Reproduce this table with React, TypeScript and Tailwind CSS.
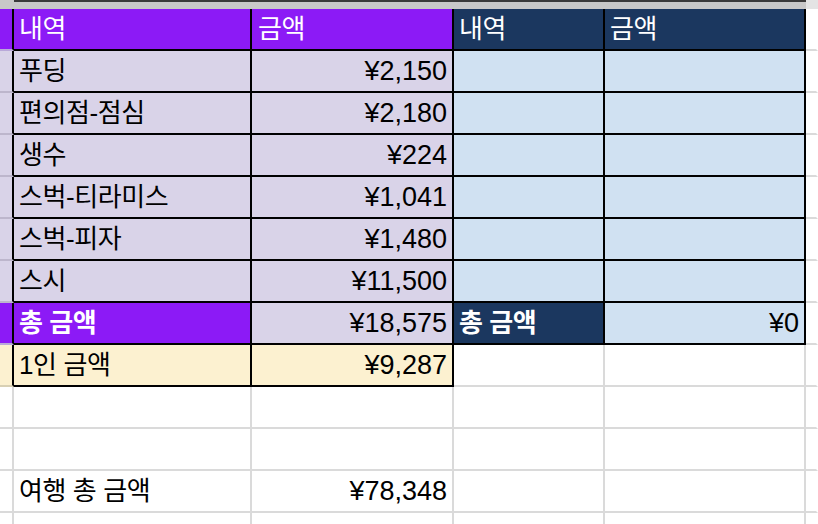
import { FC, ReactNode } from "react";

const PURPLE = "bg-[#8c1af6]";
const LAV = "bg-[#d9d3e8]";
const NAVY = "bg-[#1b375f]";
const SKY = "bg-[#d0e1f2]";
const CREAM = "bg-[#fcf1d0]";

type cellProps = {
  className?: string,
  children?: ReactNode,
}

const Cell : FC<cellProps> = ({ className, children }) => (
  <div className={`h-[42px] border-r-2 border-b-2 flex items-center overflow-hidden whitespace-nowrap ${className ?? ""}`}>
    {children}
  </div>
);

const Label : FC<{ children: ReactNode, className?: string }> = ({ children, className }) => (
  <span className={`pl-[5px] text-[26px] tracking-[-0.4px] ${className ?? ""}`}>{children}</span>
);

const Amount : FC<{ children: ReactNode }> = ({ children }) => (
  <span className="ml-auto pr-[5px] text-[27px]">{children}</span>
);

const items = [
  ["푸딩", "¥2,150"],
  ["편의점-점심", "¥2,180"],
  ["생수", "¥224"],
  ["스벅-티라미스", "¥1,041"],
  ["스벅-피자", "¥1,480"],
  ["스시", "¥11,500"],
];

const App : FC = () => {
  return (
    <div className="w-[818px] h-[524px] overflow-hidden bg-white text-black font-['Liberation_Sans','Noto_Sans_CJK_KR',sans-serif]">
      <div className="grid grid-cols-[14px_238px_202px_151px_201px_1fr]">
        {/* frozen band */}
        <div className="h-[9px] bg-[#c8c8c8]"/>
        <div className="h-[9px] bg-[#c8c8c8] border-t-2 border-t-[#3a3a3a]"/>
        <div className="h-[9px] bg-[#c8c8c8] border-t-2 border-t-[#3a3a3a]"/>
        <div className="h-[9px] bg-[#c8c8c8] border-t-2 border-t-[#3a3a3a]"/>
        <div className="h-[9px] bg-[#c8c8c8] border-t-2 border-t-[#3a3a3a]"/>
        <div className="h-[9px] bg-[#e4e4e4]"/>

        {/* header */}
        <Cell className={`${PURPLE} border-r-black border-b-[#b9a9d9]`}/>
        <Cell className={`${PURPLE} border-black text-white`}><Label>내역</Label></Cell>
        <Cell className={`${PURPLE} border-black text-white`}><Label className="pl-[6px]">금액</Label></Cell>
        <Cell className={`${NAVY} border-black text-white`}><Label>내역</Label></Cell>
        <Cell className={`${NAVY} border-black text-white`}><Label>금액</Label></Cell>
        <Cell className="border-r-transparent border-b-[#dadada]"/>

        {items.map(([name, amount]) => (
          <div key={name} className="contents">
            <Cell className={`${LAV} border-r-black border-b-[#bdb6cc]`}/>
            <Cell className={`${LAV} border-black`}><Label>{name}</Label></Cell>
            <Cell className={`${LAV} border-black`}><Amount>{amount}</Amount></Cell>
            <Cell className={`${SKY} border-black`}/>
            <Cell className={`${SKY} border-black`}/>
            <Cell className="border-r-transparent border-b-[#dadada]"/>
          </div>
        ))}

        {/* totals */}
        <Cell className={`${PURPLE} border-r-black border-b-[#b9a9d9]`}/>
        <Cell className={`${PURPLE} border-black text-white font-bold`}><Label>총 금액</Label></Cell>
        <Cell className={`${LAV} border-black`}><Amount>¥18,575</Amount></Cell>
        <Cell className={`${NAVY} border-black text-white font-bold`}><Label>총 금액</Label></Cell>
        <Cell className={`${SKY} border-black`}><Amount>¥0</Amount></Cell>
        <Cell className="border-r-transparent border-b-[#dadada]"/>

        {/* per person */}
        <Cell className={`${CREAM} border-r-black border-b-[#d8d0b4]`}/>
        <Cell className={`${CREAM} border-black`}><Label>1인 금액</Label></Cell>
        <Cell className={`${CREAM} border-black`}><Amount>¥9,287</Amount></Cell>
        <Cell className="border-[#dadada]"/>
        <Cell className="border-[#dadada]"/>
        <Cell className="border-r-transparent border-b-[#dadada]"/>

        {[0, 1].map(i => (
          <div key={i} className="contents">
            <Cell className="border-[#dadada]"/>
            <Cell className="border-[#dadada]"/>
            <Cell className="border-[#dadada]"/>
            <Cell className="border-[#dadada]"/>
            <Cell className="border-[#dadada]"/>
            <Cell className="border-r-transparent border-b-[#dadada]"/>
          </div>
        ))}

        <Cell className="border-[#dadada]"/>
        <Cell className="border-[#dadada]"><Label>여행 총 금액</Label></Cell>
        <Cell className="border-[#dadada]"><Amount>¥78,348</Amount></Cell>
        <Cell className="border-[#dadada]"/>
        <Cell className="border-[#dadada]"/>
        <Cell className="border-r-transparent border-b-[#dadada]"/>

        <Cell className="border-[#dadada]"/>
        <Cell className="border-[#dadada]"/>
        <Cell className="border-[#dadada]"/>
        <Cell className="border-[#dadada]"/>
        <Cell className="border-[#dadada]"/>
        <Cell className="border-r-transparent border-b-[#dadada]"/>
      </div>
    </div>
  );
}

export default App;
